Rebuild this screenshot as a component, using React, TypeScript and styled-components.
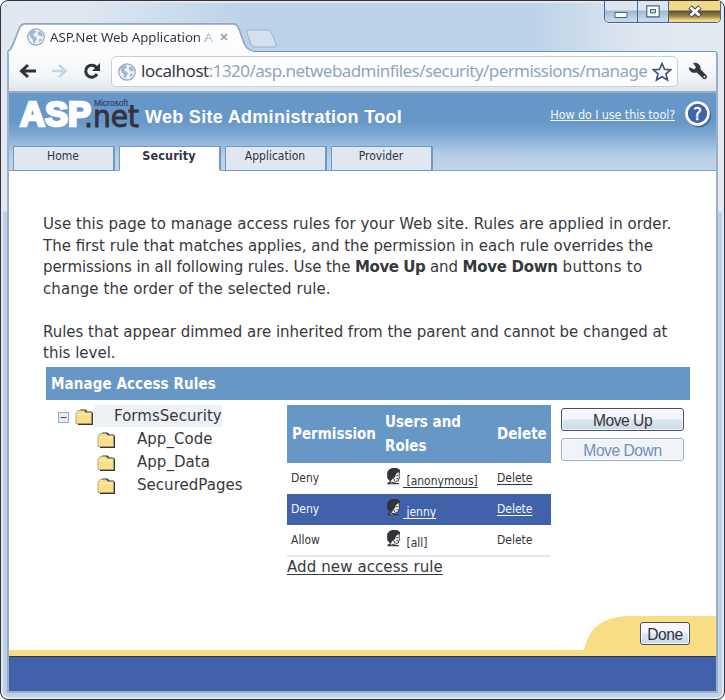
import React from "react";
import styled, { createGlobalStyle, css } from "styled-components";

const GlobalStyle = createGlobalStyle`
  *, *::before, *::after { box-sizing: border-box; }
  html, body { margin: 0; padding: 0; background: #fff; }
  body { width: 725px; height: 700px; overflow: hidden; }
`;

const verdana = `"DejaVu Sans", Verdana, sans-serif`;
const tahoma = `"DejaVu Sans Condensed", "DejaVu Sans", Tahoma, sans-serif`;
const segoe = `"Noto Sans", "Open Sans", sans-serif`;
const arial = `"Liberation Sans", Arial, sans-serif`;

const Window = styled.div`
  position: relative;
  width: 725px;
  height: 700px;
  padding: 0 6px 6px 6px;
  border: 1px solid #35343a;
  border-radius: 8px;
  background: linear-gradient(180deg, transparent 0 210px, #bcd2e8 211px),
    linear-gradient(90deg, #e0e8f1 0, #dfe8f2 80px, #bcd2e8 250px, #bcd2e8 530px, #dfe7f0 640px, #e4eaf1 100%);
  box-shadow: inset 0 0 0 2px #e3e8f0;
  display: flex;
  flex-direction: column;
`;

const TitleBar = styled.div`
  height: 50px;
  display: flex;
  align-items: flex-end;
  flex: none;
`;

const BrowserTab = styled.div`
  position: relative;
  width: 242px;
  height: 28px;
  padding-left: 20px;
  display: flex;
  align-items: center;
  gap: 5px;
  z-index: 1;
`;

const TabShape = styled.svg`
  position: absolute;
  left: 0;
  top: 0;
`;

const TabTitle = styled.span`
  position: relative;
  width: 165px;
  white-space: nowrap;
  font: 13.3px/20px ${segoe};
  letter-spacing: -0.08px;
  background: linear-gradient(90deg, #2d3440 148px, #b6c8da 158px);
  background-clip: text;
  color: transparent;
`;

const Layer = styled.svg`
  position: relative;
  flex: none;
  display: block;
`;

const NewTab = styled.svg`
  margin: 0 0 3px -4px;
`;

const WindowButtons = styled.div`
  position: absolute;
  top: 0;
  right: 3px;
  display: flex;
  width: 117px;
  height: 22px;
  border: 1px solid #4466a0;
  border-top: 0;
  border-radius: 0 0 5px 5px;
  overflow: hidden;
  box-shadow: 0 1px 0 #e8eef5;
`;

const WindowButton = styled.div<{ $w: number; $close?: boolean }>`
  width: ${(p) => p.$w}px;
  display: flex;
  align-items: center;
  justify-content: center;
  background: ${(p) =>
    p.$close
      ? "linear-gradient(#f3d889 0 9px, #5d5030 10px, #92804a 15px, #f4d87f 19px)"
      : "linear-gradient(#dce6f0 0 9px, #a3b8ce 10px, #c4d6e8 18px)"};
  & + & { border-left: 1px solid #4466a0; }
`;

const Frame = styled.div`
  flex: 1;
  display: flex;
  flex-direction: column;
  border: 2px solid #9aafc6;
  border-top: 1px solid #6b9ac8;
  border-radius: 0 4px 0 0;
  overflow: hidden;
  background: #fff;
`;

const Toolbar = styled.div`
  height: 41px;
  flex: none;
  display: flex;
  align-items: center;
  background: linear-gradient(#fdfdfe, #f2f5f9 60%, #dfe5ec);
  border-bottom: 2px solid #98adc2;
`;

const NavIcons = styled.div`
  display: flex;
  align-items: center;
  width: 102px;
  height: 39px;
`;

const AddressBar = styled.div`
  width: 567px;
  height: 31px;
  flex: none;
  display: flex;
  align-items: center;
  padding: 0 5px 0 6px;
  gap: 5px;
  border: 1px solid #c2d1e1;
  border-radius: 5px;
  background: #fff;
`;

const Url = styled.span`
  flex: 1;
  min-width: 0;
  margin-top: -2px;
  white-space: nowrap;
  font: 17px/26px ${segoe};
  letter-spacing: -0.57px;
  color: #8da5bf;
`;

const Host = styled.span`
  color: #343a46;
  letter-spacing: -0.45px;
`;

const WrenchSlot = styled.div`
  display: flex;
  padding-left: 10px;
`;

const Page = styled.main`
  flex: 1;
  display: flex;
  flex-direction: column;
  font-family: ${verdana};
  color: #37383e;
`;

const SiteHeader = styled.header`
  height: 78px;
  flex: none;
  display: flex;
  flex-direction: column;
  justify-content: space-between;
  background: linear-gradient(#6797c8 0 28px, #7ba5d0 40px, #b5cee6 62px, #c3d5e7 78px);
`;

const Banner = styled.div`
  height: 44px;
  display: flex;
  padding: 0 4px 0 10px;
`;

const Logo = styled.svg`
  width: 123px;
  height: 44px;
  flex: none;
  overflow: visible;
`;

const SiteTitle = styled.h1`
  margin: 11px 0 0 3px;
  flex: 1;
  font: 700 18px/26px ${arial};
  letter-spacing: 0.3px;
  white-space: nowrap;
  color: #fff;
`;

const HelpLink = styled.a`
  margin: 13px 9px 0 0;
  font: 12.5px/17px ${tahoma};
  letter-spacing: -0.12px;
  white-space: nowrap;
  color: #f2f6fb;
  text-decoration: underline;
`;

const SectionTabs = styled.nav`
  display: flex;
  gap: 4px;
  padding-left: 4px;
  box-shadow: inset 0 -1px 0 #7fa4cb;
`;

const SectionTab = styled.a<{ $active?: boolean }>`
  width: 102px;
  height: 25px;
  border: 1px solid #6e98c6;
  border-width: 1px 2px 1px 1px;
  background: #e0e7f0;
  font: 12px/18px ${tahoma};
  text-align: center;
  padding-right: 1px;
  color: #2f3542;
  ${(p) =>
    p.$active &&
    css`
      background: #fff;
      border-bottom-color: #fff;
      font-weight: 700;
      font-size: 12.5px;
      letter-spacing: 0.1px;
    `}
`;

const Content = styled.section`
  flex: 1;
  padding: 43px 26px 0 34px;
`;

const Paragraph = styled.p`
  margin: 0 0 21.5px;
  font-size: 15px;
  line-height: 21.6px;
`;

const Run = styled.span<{ $spacing: number }>`
  letter-spacing: ${(p) => p.$spacing}px;
  white-space: pre;
`;

const Line = styled(Run)`
  display: block;
`;

const Strong = styled(Run)`
  font-weight: 700;
`;

const SectionBar = styled.h2`
  margin: -20px 0 0 3px;
  height: 33px;
  width: 644px;
  padding-left: 5px;
  background: #6797c7;
  color: #fff;
  font: 700 15px/34px ${tahoma};
  letter-spacing: 0.1px;
`;

const Columns = styled.div`
  display: flex;
  padding-left: 3px;
`;

const Tree = styled.ul`
  list-style: none;
  margin: 0;
  padding: 5px 0 0 11px;
  width: 241px;
`;

const TreeNode = styled.li<{ $level: number }>`
  display: flex;
  align-items: center;
  height: 23px;
  padding-left: ${(p) => p.$level * 40}px;
`;

const TreeLabel = styled.span<{ $selected?: boolean }>`
  height: 22px;
  padding-left: ${(p) => (p.$selected ? 20 : 21)}px;
  font-size: 15px;
  line-height: 22px;
  letter-spacing: 0.04px;
  background: ${(p) => (p.$selected ? "#edf1f6" : "transparent")};
`;

const Expander = styled.svg`
  margin: 2px 6px 0 1px;
`;

const FolderIcon = styled.svg`
  margin-top: 3px;
`;

const Rules = styled.div`
  width: 264px;
  margin: 5px 10px 0 0;
`;

const RuleHead = styled.div`
  display: grid;
  grid-template-columns: 93px 112px 1fr;
  align-items: center;
  height: 58px;
  padding-left: 5px;
  background: #6797c7;
  color: #fff;
  font: 700 15px/24px ${tahoma};
`;

const RuleRow = styled.div<{ $selected?: boolean }>`
  display: grid;
  grid-template-columns: 95px 111px 1fr;
  align-items: center;
  height: 31px;
  padding: 0 0 0 4px;
  font: 12px/18px ${tahoma};
  color: ${(p) => (p.$selected ? "#f3f6fb" : "#33353d")};
  background: ${(p) => (p.$selected ? "#4162aa" : "transparent")};
`;

const UserCell = styled.span`
  display: flex;
  align-items: flex-start;
  height: 24px;
`;

const HeadIcon = styled.svg`
  margin-top: 2px;
`;

const UserName = styled.span<{ $link?: boolean }>`
  margin: 6px 0 0 2px;
  white-space: pre;
  text-decoration: ${(p) => (p.$link ? "underline" : "none")};
  text-underline-offset: 2px;
`;

const DeleteAction = styled.span<{ $link?: boolean }>`
  text-decoration: ${(p) => (p.$link ? "underline" : "none")};
  text-underline-offset: 2px;
`;

const AddRule = styled.a`
  display: block;
  margin-top: -1px;
  border-top: 2px solid #e1e8f0;
  font-size: 15px;
  line-height: 21px;
  letter-spacing: 0.1px;
  text-decoration: underline;
  text-underline-offset: 2px;
`;

const Actions = styled.div`
  display: flex;
  flex-direction: column;
  gap: 7px;
  padding-top: 8px;
`;

const Button = styled.button<{ $w: number; $dim?: boolean }>`
  width: ${(p) => p.$w}px;
  height: 23px;
  padding: 2px 0 0;
  border: 1px solid #46506a;
  border-radius: 3px;
  box-shadow: inset 0 0 0 1px #f7f9fc;
  background: linear-gradient(#f5f7fa 0 45%, #dde6ee 52%, #c9d9e7);
  color: #33353d;
  font: 15.6px/19px ${arial};
  letter-spacing: -0.45px;
  ${(p) =>
    p.$dim &&
    css`
      border-color: #9bb0c8;
      background: #f0f3f7;
      color: #748fb8;
    `}
`;

const Footer = styled.footer`
  flex: none;
`;

const DoneRow = styled.div`
  position: relative;
  height: 40px;
  display: flex;
  justify-content: flex-end;
  align-items: flex-start;
  padding: 6px 26px 0 0;
`;

const Swoosh = styled.svg`
  position: absolute;
  left: 0;
  top: 0;
`;

const DoneSlot = styled.div`
  position: relative;
`;

const BlueBar = styled.div`
  height: 35px;
  background: #4162aa;
  border-top: 1px solid #343542;
`;

const Globe = ({ size }: { size: number }) => (
  <Layer width={size} height={size} viewBox="0 0 18 18">
    <circle cx="9" cy="9" r="8.2" fill="#eef3f8" stroke="#91a9c4" strokeWidth="1.2" />
    <path d="M3 4.2 6 2l3 .8-.5 2L6.2 6l.6 1.8 2.5 1.4.6 2-1.8 2-.3 2.6-1.5-1L5.5 11 3.4 9.3 2.5 6.6zM11.5 3l3 1.8 1.3 2.6-1.6 1-1.8-.6-1.8-1.7zM12 11.2l2.8-.8-.6 2.4-1.9 1.6z" fill="#a3b8cf" />
  </Layer>
);

const Folder = () => (
  <FolderIcon width="19" height="17" viewBox="0 0 19 17">
    <path d="M2.5 4.5 4 3v-.5l1.5-2h5L12.5 2.5h4L18 4v12H3z" fill="#35353a" />
    <path d="M1 4.5 3 1.5h6l2 2h5.5v11H1z" fill="#f9df88" stroke="#a89b70" strokeWidth=".8" />
    <path d="M2 5.5h13.5" stroke="#fdf0bd" strokeWidth="1" />
  </FolderIcon>
);

const Head = () => (
  <HeadIcon width="15" height="17" viewBox="0 0 15 17">
    <path d="M3 1.5 6 0h5l3 2v3l-2 .2-1.7 1.6L10 9l-1 1.5-2-.2-1.5 2L4 13.5 1.2 10V4z" fill="#333238" />
    <path d="M13.2 3.5v5l.6 1.5-1.1.6-.3 2.4-2.4.5v1L6 14l1.5-4 1.5-1 1-3z" fill="#e9edf3" />
    <path d="M13.2 4v4.5l.7 1.5-1.2.6-.3 2.4-2.6.4M10.3 7.5l1.7.2M10.5 10.7h1.5M7.5 10 9 13.5" stroke="#333238" strokeWidth=".9" fill="none" />
    <path d="M1.5 16.3v-1.5l2.8-1.6 2 .8 2.5.5 4.2.8v1z" fill="#333238" />
    <path d="m4.5 14.6 2 .7" stroke="#d8e1eb" strokeWidth=".9" />
  </HeadIcon>
);

const LogoMark = () => (
  <Logo viewBox="0 0 123 44">
    <text x="1" y="33" fontFamily="Liberation Sans" fontWeight="700" fontSize="35" fill="#fff" stroke="#fff" strokeWidth="2.6" textLength="71" lengthAdjust="spacingAndGlyphs">ASP</text>
    <text x="65" y="33.5" fontFamily="DejaVu Sans" fontSize="30" fill="#343238" stroke="#343238" strokeWidth=".9" textLength="55" lengthAdjust="spacingAndGlyphs">.net</text>
    <text x="75" y="13" fontFamily="Liberation Sans" fontSize="8.5" fill="#2f426b" stroke="#2f426b" strokeWidth=".2" textLength="34" lengthAdjust="spacingAndGlyphs">Microsoft</text>
  </Logo>
);

const rules = [
  { permission: "Deny", user: " [anonymous]", link: true, canDelete: true },
  { permission: "Deny", user: " jenny", link: true, canDelete: true, selected: true },
  { permission: "Allow", user: " [all]" },
];

export default function App() {
  return (
    <>
      <GlobalStyle />
      <Window>
        <TitleBar>
          <BrowserTab>
            <TabShape width="246" height="30" viewBox="0 0 246 30">
              <path d="M0 29.5C4 27 5 24 7 19L12 6Q14 .8 18 .8H226Q230 .8 232 6L237 20Q240 27.5 246 27.5V30H0z" fill="#fdfdfe" />
              <path d="M0 29.5C4 27 5 24 7 19L12 6Q14 .8 18 .8H226Q230 .8 232 6L237 20Q240 27.5 246 27.5" fill="none" stroke="#8ea8c5" strokeWidth="1.7" />
            </TabShape>
            <Globe size={18} />
            <TabTitle>ASP.Net Web Application A</TabTitle>
            <Layer width="8" height="8" viewBox="0 0 8 8"><path d="m1 1 6 6m0-6L1 7" stroke="#879fba" strokeWidth="1.6" /></Layer>
          </BrowserTab>
          <NewTab width="32" height="19" viewBox="0 0 32 19">
            <path d="M3 1h20q3 0 5 6l3 8q1 3-2 3H10q-3 0-4-3L2 4Q1 1 3 1z" fill="#d3e0ed" stroke="#9eb2c9" />
          </NewTab>
        </TitleBar>
        <WindowButtons>
          <WindowButton $w={32}><svg width="14" height="14" viewBox="0 0 14 14"><path d="M1 7.5h12v5H1z" fill="#fff" stroke="#47618b" /></svg></WindowButton>
          <WindowButton $w={31}><svg width="14" height="13" viewBox="0 0 14 13"><path d="M.8.8h12.4v11H.8z" fill="#fff" stroke="#47618b" strokeWidth="1.2" /><path d="M4.5 4.5h5v3.5h-5z" fill="#c2d2e3" stroke="#47618b" /></svg></WindowButton>
          <WindowButton $w={52} $close><svg width="14" height="13" viewBox="0 0 14 13"><path d="m2 2 10 9m0-9L2 11" stroke="#414960" strokeWidth="5" /><path d="m2.5 2.5 9 8m0-8-9 8" stroke="#fff" strokeWidth="2.8" /></svg></WindowButton>
        </WindowButtons>
        <Frame>
          <Toolbar>
            <NavIcons>
              <svg width="100" height="38" viewBox="0 0 100 38" fill="none">
                <path d="M27 18H13m6-6-6.5 6 6.5 6" stroke="#303239" strokeWidth="3" />
                <path d="M43 18h13m-6-6 6.5 6-6.5 6" stroke="#c5d4e4" strokeWidth="2.5" />
                <path d="M87.5 14.5A6 6 0 1 0 88 21" stroke="#303239" strokeWidth="3" />
                <path d="M91 10v8h-8z" fill="#303239" />
              </svg>
            </NavIcons>
            <AddressBar>
              <Globe size={18} />
              <Url><Host>localhost</Host>:1320/asp.netwebadminfiles/security/permissions/manage</Url>
              <svg width="20" height="20" viewBox="0 0 20 20"><path d="m10 1.5 2.5 5.8 6.2.5-4.7 4.1 1.5 6.2-5.5-3.3-5.5 3.3L6 11.9 1.3 7.8l6.2-.5z" fill="#f5f8fb" stroke="#3f5478" strokeWidth="1.7" /></svg>
            </AddressBar>
            <WrenchSlot>
              <svg width="20" height="19" viewBox="0 0 20 19"><path d="M5 .8 9 1q4 2 3.5 6.2l6.2 6.4q1.2 1.6-.4 3-1.8 1.2-3.2 0L8.8 10.5Q3.5 12 1 7.2L1.3 5 6 7.5l2-2.2z" fill="#34373f" /><circle cx="16.5" cy="14.7" r="1" fill="#dfe5ec" /></svg>
            </WrenchSlot>
          </Toolbar>
          <Page>
            <SiteHeader>
              <Banner>
                <LogoMark />
                <SiteTitle>Web Site Administration Tool</SiteTitle>
                <HelpLink>How do I use this tool?</HelpLink>
                <svg width="28" height="40" viewBox="0 0 28 40">
                  <circle cx="14.8" cy="22" r="12.3" fill="#416299" />
                  <circle cx="13.5" cy="20.5" r="11" fill="#4162aa" stroke="#fff" strokeWidth="2.6" />
                  <text x="13.5" y="27" textAnchor="middle" fontFamily="DejaVu Sans Condensed" fontWeight="400" fontSize="18" stroke="#fff" strokeWidth=".5" fill="#fff">?</text>
                </svg>
              </Banner>
              <SectionTabs>
                <SectionTab>Home</SectionTab>
                <SectionTab $active>Security</SectionTab>
                <SectionTab>Application</SectionTab>
                <SectionTab>Provider</SectionTab>
              </SectionTabs>
            </SiteHeader>
            <Content>
              <Paragraph>
                <Line $spacing={0.05}>Use this page to manage access rules for your Web site. Rules are applied in order.</Line>
                <Line $spacing={0}>The first rule that matches applies, and the permission in each rule overrides the</Line>
                <Line $spacing={-0.09}>
                  permissions in all following rules. Use the <Strong $spacing={-0.45}>Move Up</Strong> and <Strong $spacing={-0.3}>Move Down</Strong>
                  <Run $spacing={0.26}> buttons to</Run>
                </Line>
                <Line $spacing={0.08}>change the order of the selected rule.</Line>
              </Paragraph>
              <Paragraph>
                <Line $spacing={-0.02}>Rules that appear dimmed are inherited from the parent and cannot be changed at</Line>
                <Line $spacing={0}>this level.</Line>
              </Paragraph>
              <SectionBar>Manage Access Rules</SectionBar>
              <Columns>
                <Tree>
                  <TreeNode $level={0}>
                    <Expander width="11" height="11" viewBox="0 0 11 11"><path d="M.5.5h10v10H.5z" fill="#e8edf4" stroke="#93a9c4" /><path d="M2.5 5.5h6" stroke="#3b4e74" /></Expander>
                    <Folder />
                    <TreeLabel $selected>FormsSecurity</TreeLabel>
                  </TreeNode>
                  {["App_Code", "App_Data", "SecuredPages"].map((name) => (
                    <TreeNode key={name} $level={1}>
                      <Folder />
                      <TreeLabel>{name}</TreeLabel>
                    </TreeNode>
                  ))}
                </Tree>
                <Rules>
                  <RuleHead>
                    <span>Permission</span>
                    <span>Users and<br />Roles</span>
                    <span>Delete</span>
                  </RuleHead>
                  {rules.map((r) => (
                    <RuleRow key={r.user} $selected={r.selected}>
                      <span>{r.permission}</span>
                      <UserCell>
                        <Head />
                        <UserName $link={r.link}>{r.user}</UserName>
                      </UserCell>
                      <DeleteAction $link={r.canDelete}>Delete</DeleteAction>
                    </RuleRow>
                  ))}
                  <AddRule>Add new access rule</AddRule>
                </Rules>
                <Actions>
                  <Button $w={123}>Move Up</Button>
                  <Button $w={123} $dim>Move Down</Button>
                </Actions>
              </Columns>
            </Content>
            <Footer>
              <DoneRow>
                <Swoosh width="708" height="40" viewBox="0 0 708 40"><path d="M0 34H575Q580 11 598 4Q608 0 622 0H708V40H0z" fill="#f9dd84" /></Swoosh>
                <DoneSlot><Button $w={50}>Done</Button></DoneSlot>
              </DoneRow>
              <BlueBar />
            </Footer>
          </Page>
        </Frame>
      </Window>
    </>
  );
}
